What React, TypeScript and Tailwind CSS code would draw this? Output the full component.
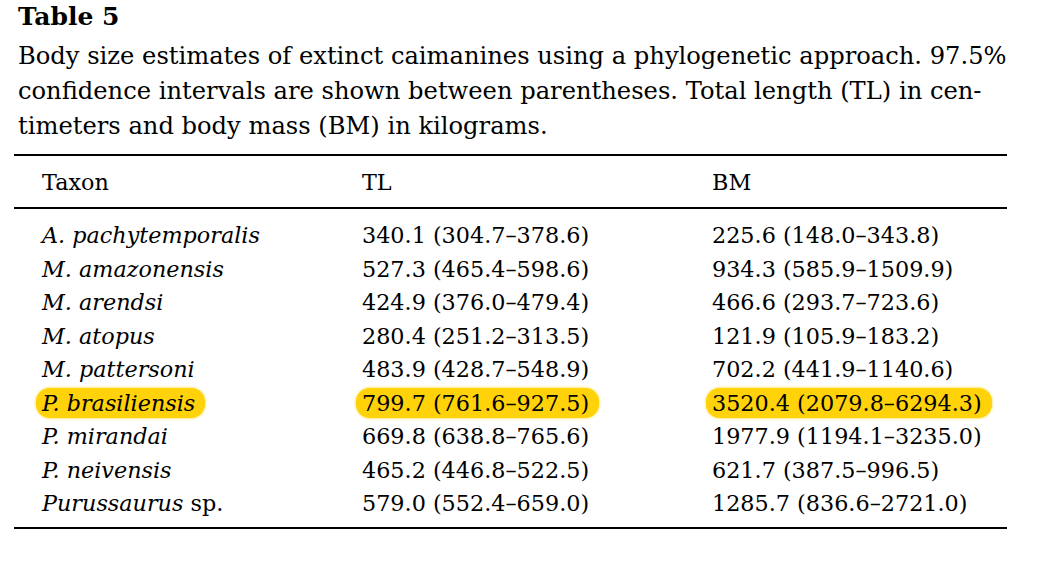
const rows: { taxon: React.ReactNode; tl: string; bm: string; hl?: boolean }[] = [
  { taxon: <i>A. pachytemporalis</i>, tl: "340.1 (304.7–378.6)", bm: "225.6 (148.0–343.8)" },
  { taxon: <i>M. amazonensis</i>, tl: "527.3 (465.4–598.6)", bm: "934.3 (585.9–1509.9)" },
  { taxon: <i>M. arendsi</i>, tl: "424.9 (376.0–479.4)", bm: "466.6 (293.7–723.6)" },
  { taxon: <i>M. atopus</i>, tl: "280.4 (251.2–313.5)", bm: "121.9 (105.9–183.2)" },
  { taxon: <i>M. pattersoni</i>, tl: "483.9 (428.7–548.9)", bm: "702.2 (441.9–1140.6)" },
  { taxon: <i>P. brasiliensis</i>, tl: "799.7 (761.6–927.5)", bm: "3520.4 (2079.8–6294.3)", hl: true },
  { taxon: <i>P. mirandai</i>, tl: "669.8 (638.8–765.6)", bm: "1977.9 (1194.1–3235.0)" },
  { taxon: <i>P. neivensis</i>, tl: "465.2 (446.8–522.5)", bm: "621.7 (387.5–996.5)" },
  {
    taxon: (
      <>
        <i>Purussaurus</i> sp.
      </>
    ),
    tl: "579.0 (552.4–659.0)",
    bm: "1285.7 (836.6–2721.0)",
  },
];

function Cell({ children, hl }: { children: React.ReactNode; hl?: boolean }) {
  if (!hl) return <div className="whitespace-nowrap">{children}</div>;
  return (
    <div className="whitespace-nowrap">
      <span className="-ml-[6px] inline-block h-[30px] rounded-[14px] bg-[#FFD20A] pl-[6px] pr-[10px] leading-[30px] shadow-[0_0_3px_#FFD20A]">
        {children}
      </span>
    </div>
  );
}

export default function App() {
  return (
    <div className="h-[565px] w-[1050px] bg-white text-black" style={{ fontFamily: '"DejaVu Serif", serif' }}>
      <div className="pl-[18px] pt-[1px]">
        <h1 className="text-[25px] font-bold leading-[32px]">Table 5</h1>
        <p className="mt-[6px] whitespace-nowrap text-[24.2px] leading-[35px]">
          Body size estimates of extinct caimanines using a phylogenetic approach. 97.5%
          <br />
          confidence intervals are shown between parentheses. Total length (TL) in cen-
          <br />
          timeters and body mass (BM) in kilograms.
        </p>
      </div>

      <div className="ml-[14px] mt-[10px] w-[993px] text-[22.3px]">
        <div className="h-[2px] bg-black" />
        <div className="grid h-[51px] grid-cols-[320px_350px_1fr] items-center pl-[28px] pt-[2px]">
          <div>Taxon</div>
          <div>TL</div>
          <div>BM</div>
        </div>
        <div className="h-[2px] bg-black" />
        <div className="pb-[6px] pt-[10px]">
          {rows.map((r, i) => (
            <div
              key={i}
              className="grid h-[33.5px] grid-cols-[320px_350px_1fr] items-center pl-[28px]"
            >
              <Cell hl={r.hl}>{r.taxon}</Cell>
              <Cell hl={r.hl}>{r.tl}</Cell>
              <Cell hl={r.hl}>{r.bm}</Cell>
            </div>
          ))}
        </div>
        <div className="h-[2px] bg-black" />
      </div>
    </div>
  );
}
